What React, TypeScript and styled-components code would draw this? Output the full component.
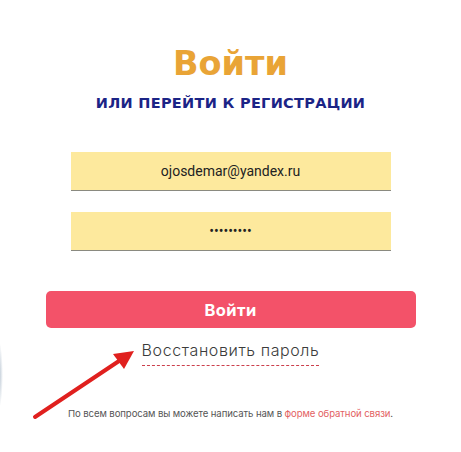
import React from "react";
import styled, { createGlobalStyle } from "styled-components";

const Global = createGlobalStyle`
  html, body { margin: 0; padding: 0; background: #ffffff; }
  body { font-family: Inter, "Noto Sans", sans-serif; }
`;

const Page = styled.div`
  position: relative;
  width: 461px;
  height: 452px;
  overflow: hidden;
  display: flex;
  flex-direction: column;
  align-items: center;
  padding-top: 46px;
  box-sizing: border-box;
`;

const Title = styled.h1`
  margin: 0;
  font-family: "DejaVu Sans", sans-serif;
  font-weight: 700;
  font-size: 33.5px;
  line-height: 36px;
  color: #e9a436;
`;

const Subtitle = styled.div`
  margin-top: 12px;
  font-family: "DejaVu Sans", sans-serif;
  font-weight: 700;
  font-size: 14.5px;
  line-height: 18px;
  color: #1b2486;
  letter-spacing: 0.3px;
`;

const Form = styled.form`
  margin-top: 40px;
  display: flex;
  flex-direction: column;
  align-items: center;
  gap: 21px;
`;

const Field = styled.input`
  width: 320px;
  height: 39px;
  box-sizing: border-box;
  border: none;
  border-bottom: 1px solid #8a8a80;
  background: #fde99d;
  text-align: center;
  font-family: Roboto, sans-serif;
  font-size: 14px;
  color: #222;
  outline: none;
  padding: 0;
`;

const Button = styled.button`
  margin-top: 40px;
  width: 370px;
  height: 37px;
  border: none;
  border-radius: 5px;
  background: #f35269;
  color: #fff;
  font-family: Inter, sans-serif;
  font-weight: 700;
  font-size: 16.5px;
  letter-spacing: 0.4px;
  cursor: pointer;
`;

const Restore = styled.a`
  margin-top: 12px;
  display: inline-block;
  font-family: Inter, sans-serif;
  font-weight: 300;
  font-size: 16px;
  line-height: 20px;
  color: #3b3b3b;
  letter-spacing: 0.6px;
  padding-bottom: 5px;
  border-bottom: 1px dashed #cc3f4c;
  text-decoration: none;
`;

const Footer = styled.p`
  margin: 42px 0 0;
  font-family: Inter, sans-serif;
  font-size: 9.6px;
  line-height: 12px;
  color: #555;
  letter-spacing: -0.1px;
`;

const Link = styled.a`
  color: #e35f63;
  text-decoration: none;
`;

const Arrow = styled.svg`
  position: absolute;
  left: 0;
  top: 0;
  pointer-events: none;
`;

const EdgeShade = styled.div`
  position: absolute;
  left: -6px;
  top: 340px;
  width: 9px;
  height: 70px;
  border-radius: 50%;
  background: radial-gradient(ellipse at center, rgba(90,120,150,0.5), rgba(200,210,220,0) 70%);
`;

export default function App() {
  return (
    <>
      <Global />
      <Page>
        <Title>Войти</Title>
        <Subtitle>ИЛИ ПЕРЕЙТИ К РЕГИСТРАЦИИ</Subtitle>
        <Form onSubmit={(e) => e.preventDefault()}>
          <Field type="email" defaultValue="ojosdemar@yandex.ru" />
          <Field type="password" defaultValue="123456789" />
        </Form>
        <Button type="button">Войти</Button>
        <Restore href="#">Восстановить пароль</Restore>
        <Footer>
          По всем вопросам вы можете написать нам в <Link href="#">форме обратной связи</Link>.
        </Footer>
        <EdgeShade />
        <Arrow width="461" height="452" viewBox="0 0 461 452">
          <line x1="35" y1="417" x2="122" y2="359" stroke="#e0201e" strokeWidth="4" strokeLinecap="round" />
          <polygon points="134,351 113,354 124,369" fill="#e0201e" />
        </Arrow>
      </Page>
    </>
  );
}
